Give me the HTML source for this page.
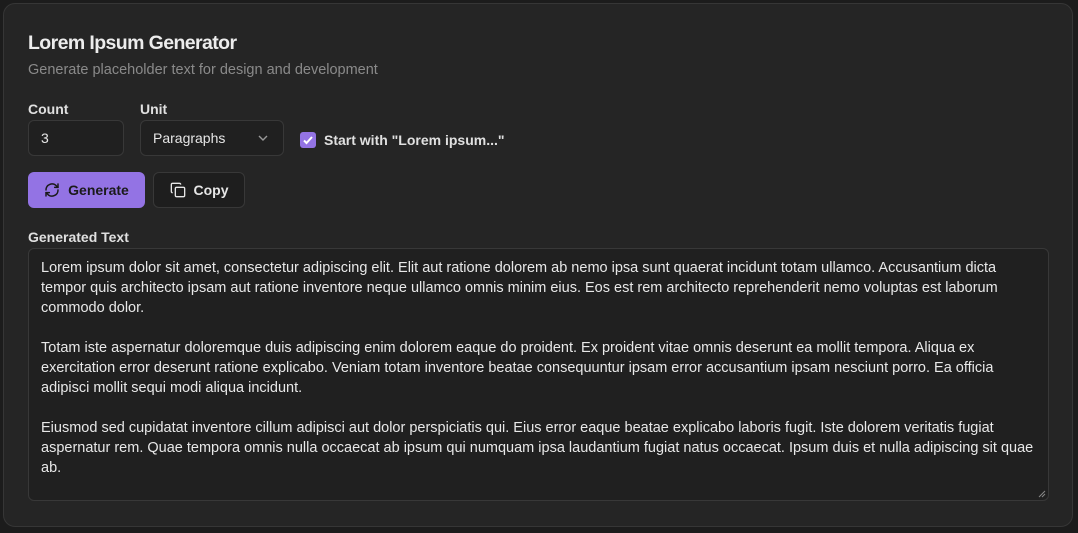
<!DOCTYPE html>
<html><head><meta charset="utf-8"><style>
*{box-sizing:border-box;margin:0;padding:0}
html,body{width:1078px;height:533px;background:#1c1c1c;overflow:hidden;font-family:"Liberation Sans",sans-serif;color:#e6e6e6}
.card{position:absolute;left:3px;top:3px;width:1070px;height:524px;background:#252525;border:1px solid #363636;border-radius:12px}
.abs{position:absolute}
h1{position:absolute;left:24px;top:28px;font-size:19.5px;font-weight:bold;color:#ececec;letter-spacing:-0.6px}
.sub{left:24px;top:58px;font-size:14.5px;color:#8a8a8a}
.lbl{font-size:14px;font-weight:bold;color:#e0e0e0}
.box{position:absolute;border:1px solid #383838;border-radius:6px;background:#202020}
.btn{position:absolute;border-radius:6px;display:flex;align-items:center;justify-content:center;font-size:14px;font-weight:bold;gap:8px}
.ta{left:24px;top:244px;width:1021px;height:253px;padding:9px 12px;font-size:14.5px;line-height:20px;color:#e8e8e8;white-space:nowrap}
</style></head><body>
<div class="card">
<h1>Lorem Ipsum Generator</h1>
<div class="abs sub">Generate placeholder text for design and development</div>
<div class="abs lbl" style="left:24px;top:97px">Count</div>
<div class="abs lbl" style="left:136px;top:97px">Unit</div>
<div class="box" style="left:24px;top:116px;width:96px;height:36px;padding:9px 12px;font-size:14px">3</div>
<div class="box" style="left:136px;top:116px;width:144px;height:36px;padding:9px 12px;font-size:14px">Paragraphs
<svg class="abs" style="left:116px;top:13px" width="12" height="8" viewBox="0 0 12 8"><path d="M2 2l4 4 4-4" fill="none" stroke="#999" stroke-width="1.4"/></svg></div>
<div class="abs" style="left:296px;top:128px;width:16px;height:16px;background:#9373e4;border-radius:3px">
<svg width="16" height="16" viewBox="0 0 16 16"><path d="M4 8.5l2.5 2.5L12 5" fill="none" stroke="#fff" stroke-width="2"/></svg></div>
<div class="abs lbl" style="left:320px;top:128px">Start with "Lorem ipsum..."</div>
<div class="btn" style="left:24px;top:168px;width:117px;height:36px;background:#9373e4;color:#1a1a1a">
<svg width="16" height="16" viewBox="0 0 24 24" fill="none" stroke="#1a1a1a" stroke-width="2.2" stroke-linecap="round" stroke-linejoin="round"><path d="M3 12a9 9 0 0 1 15.5-6.3L21 8"/><path d="M21 3v5h-5"/><path d="M21 12a9 9 0 0 1-15.5 6.3L3 16"/><path d="M8 16H3v5"/></svg>Generate</div>
<div class="btn" style="left:149px;top:168px;width:92px;height:36px;background:#1e1e1e;border:1px solid #383838;color:#e6e6e6">
<svg width="16" height="16" viewBox="0 0 24 24" fill="none" stroke="#e6e6e6" stroke-width="2" stroke-linejoin="round"><rect x="8" y="8" width="14" height="14" rx="2"/><path d="M4 16c-1.1 0-2-.9-2-2V4c0-1.1.9-2 2-2h10c1.1 0 2 .9 2 2"/></svg>Copy</div>
<div class="abs lbl" style="left:24px;top:225px">Generated Text</div>
<div class="box ta">Lorem ipsum dolor sit amet, consectetur adipiscing elit. Elit aut ratione dolorem ab nemo ipsa sunt quaerat incidunt totam ullamco. Accusantium dicta<br>tempor quis architecto ipsam aut ratione inventore neque ullamco omnis minim eius. Eos est rem architecto reprehenderit nemo voluptas est laborum<br>commodo dolor.<br><br>Totam iste aspernatur doloremque duis adipiscing enim dolorem eaque do proident. Ex proident vitae omnis deserunt ea mollit tempora. Aliqua ex<br>exercitation error deserunt ratione explicabo. Veniam totam inventore beatae consequuntur ipsam error accusantium ipsam nesciunt porro. Ea officia<br>adipisci mollit sequi modi aliqua incidunt.<br><br>Eiusmod sed cupidatat inventore cillum adipisci aut dolor perspiciatis qui. Eius error eaque beatae explicabo laboris fugit. Iste dolorem veritatis fugiat<br>aspernatur rem. Quae tempora omnis nulla occaecat ab ipsum qui numquam ipsa laudantium fugiat natus occaecat. Ipsum duis et nulla adipiscing sit quae<br>ab.
<svg class="abs" style="right:2px;bottom:2px" width="8" height="8" viewBox="0 0 8 8"><path d="M7 1L1 7M7 4L4 7" stroke="#888" stroke-width="1"/></svg></div>
</div>
</body></html>
